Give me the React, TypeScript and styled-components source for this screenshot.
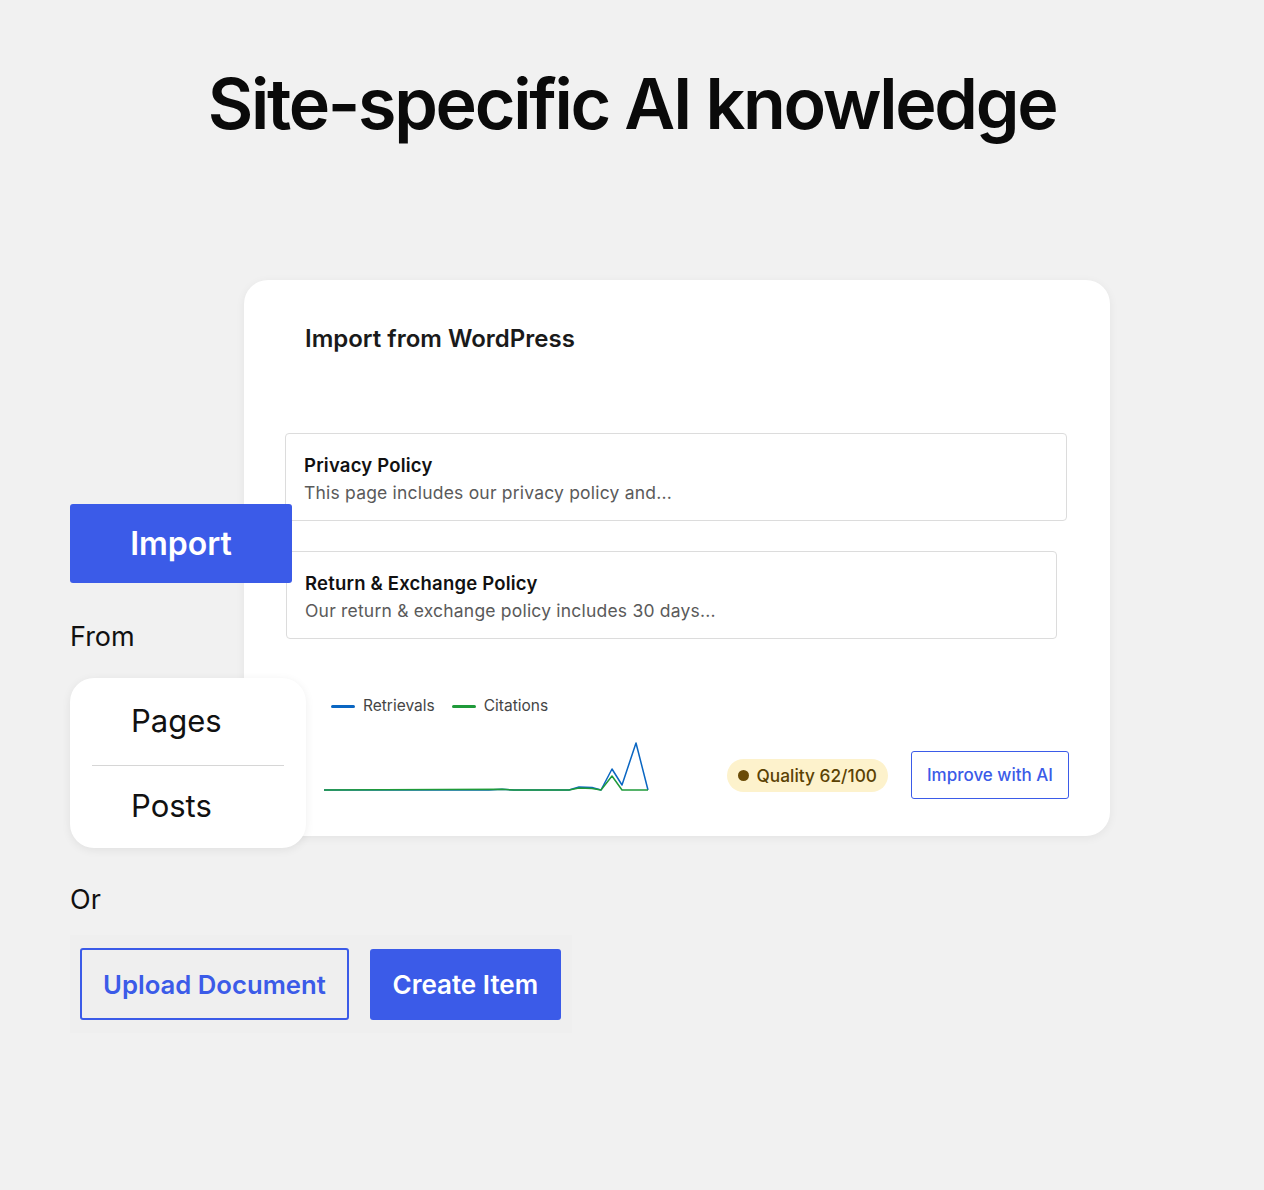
import styled, { createGlobalStyle } from 'styled-components';

const GlobalStyle = createGlobalStyle`
	body {
		margin: 0;
		background: #f1f1f1;
		font-family: Inter, 'Noto Sans', sans-serif;
		color: #111;
	}
`;

const Page = styled.div`
	width: 1264px;
	height: 1190px;
	padding: 61px 0 0 70px;
	box-sizing: border-box;
`;

const Title = styled.h1`
	margin: 0 0 0 -70px;
	text-align: center;
	font-size: 70px;
	line-height: 86px;
	font-weight: 600;
	letter-spacing: -2.3px;
	color: #0a0a0a;
`;

const Stage = styled.div`
	display: grid;
	grid-template-columns: 174px 62px 804px;
	margin-top: 133px;
`;

const Card = styled.div`
	grid-column: 2 / 4;
	grid-row: 1;
	align-self: start;
	background: #fff;
	border-radius: 24px;
	box-shadow: 0 2px 10px rgba(0, 0, 0, 0.06);
	padding: 44px 43px 37px 41px;
	display: flex;
	flex-direction: column;
`;

const CardTitle = styled.h2`
	margin: 0 0 79px 20px;
	font-size: 24px;
	line-height: 30px;
	font-weight: 600;
	color: #1a1a1a;
`;

const Item = styled.div<{ $inset: number; $gap: number }>`
	margin-right: ${({ $inset }) => $inset}px;
	margin-left: ${({ $inset }) => ($inset ? 1 : 0)}px;
	margin-bottom: ${({ $gap }) => $gap}px;
	border: 1.5px solid #dcdcdc;
	border-radius: 4px;
	padding: 19px 18px 15px;
`;

const ItemTitle = styled.div`
	font-size: 18.5px;
	line-height: 24px;
	font-weight: 600;
	letter-spacing: 0.2px;
	color: #111;
`;

const ItemDesc = styled.div`
	margin-top: 4px;
	font-size: 17.5px;
	line-height: 24px;
	letter-spacing: 0.2px;
	color: #5a5a5a;
`;

const StatsRow = styled.div`
	display: flex;
	align-items: flex-end;
	justify-content: space-between;
	margin-top: 57px;
`;

const ChartBox = styled.div`
	display: flex;
	flex-direction: column;
	margin-left: 39px;
`;

const Legend = styled.div`
	display: flex;
	gap: 17px;
	margin-left: 7px;
	font-size: 15.5px;
	line-height: 20px;
	color: #454545;
`;

const LegendItem = styled.span<{ $color: string }>`
	display: flex;
	align-items: center;
	gap: 8px;

	&::before {
		content: '';
		width: 24px;
		height: 3px;
		border-radius: 2px;
		background: ${({ $color }) => $color};
	}
`;

const Chart = styled.svg`
	margin: 19px 0 4px;
`;

const Actions = styled.div`
	display: flex;
	align-items: center;
	gap: 23px;
	margin-right: -2px;
`;

const Badge = styled.span`
	display: flex;
	align-items: center;
	gap: 8px;
	height: 33px;
	padding: 0 11px;
	border-radius: 17px;
	background: #fdf2cc;
	color: #5b4204;
	font-size: 17.3px;
	font-weight: 500;

	&::before {
		content: '';
		width: 11px;
		height: 11px;
		border-radius: 50%;
		background: #6b4c08;
	}
`;

const OutlineButton = styled.button<{ $big?: boolean }>`
	box-sizing: border-box;
	flex-shrink: 0;
	white-space: nowrap;
	height: ${({ $big }) => ($big ? 72 : 48)}px;
	padding: 0 ${({ $big }) => ($big ? 21 : 15)}px;
	border: ${({ $big }) => ($big ? 2 : 1.5)}px solid #3b5be8;
	border-radius: 3px;
	background: ${({ $big }) => ($big ? 'transparent' : '#fff')};
	color: #3b5be8;
	font-family: Inter, sans-serif;
	font-size: ${({ $big }) => ($big ? 25.7 : 17)}px;
	font-weight: ${({ $big }) => ($big ? 600 : 500)};
`;

const SolidButton = styled.button<{ $w: number; $h: number; $size: number }>`
	flex-shrink: 0;
	width: ${({ $w }) => $w}px;
	height: ${({ $h }) => $h}px;
	white-space: nowrap;
	border: none;
	border-radius: 3px;
	background: #3b5be8;
	color: #fff;
	font-family: Inter, sans-serif;
	font-size: ${({ $size }) => $size}px;
	font-weight: 600;
`;

const LeftColumn = styled.div`
	grid-column: 1 / 3;
	grid-row: 1;
	margin-top: 224px;
	display: flex;
	flex-direction: column;
	align-items: flex-start;
	z-index: 1;
`;

const Label = styled.div<{ $top: number }>`
	margin-top: ${({ $top }) => $top}px;
	font-size: 27px;
	line-height: 32px;
	color: #111;
`;

const SourceCard = styled.div`
	margin-top: 25px;
	width: 236px;
	box-sizing: border-box;
	background: #fff;
	border-radius: 24px;
	box-shadow: 0 2px 10px rgba(0, 0, 0, 0.07);
	padding: 0 22px;
`;

const Source = styled.div`
	padding: 0 0 2px 39px;
	height: 87px;
	box-sizing: border-box;
	display: flex;
	align-items: center;
	font-size: 31px;
	color: #111;

	& + & {
		border-top: 1.5px solid #d6d6d6;
		height: 83px;
		padding-bottom: 4px;
	}
`;

const ButtonTray = styled.div`
	margin-top: 19px;
	display: flex;
	align-items: center;
	gap: 21px;
	width: 502px;
	box-sizing: border-box;
	padding: 13px 10px;
	background: #efefef;
`;

const blue = '0,55 165,55 178,54.3 190,55 245,55 255,52 268,52.5 277,55 288,34 298,50 312,8 324,55';
const green = '0,55 178,54.3 190,55 245,55 255,53 268,53.5 277,55 288,41 298,55 324,55';

export default function App() {
	return (
		<Page>
			<GlobalStyle />
			<Title>Site-specific AI knowledge</Title>
			<Stage>
				<Card>
					<CardTitle>Import from WordPress</CardTitle>
					<Item $inset={0} $gap={30}>
						<ItemTitle>Privacy Policy</ItemTitle>
						<ItemDesc>This page includes our privacy policy and...</ItemDesc>
					</Item>
					<Item $inset={10} $gap={0}>
						<ItemTitle>Return &amp; Exchange Policy</ItemTitle>
						<ItemDesc>Our return &amp; exchange policy includes 30 days...</ItemDesc>
					</Item>
					<StatsRow>
						<ChartBox>
							<Legend>
								<LegendItem $color="#0a66c2">Retrievals</LegendItem>
								<LegendItem $color="#1f9a3a">Citations</LegendItem>
							</Legend>
							<Chart width="326" height="60" viewBox="0 0 326 60">
								<polyline points={blue} fill="none" stroke="#0a66c2" strokeWidth="1.5" strokeLinejoin="round" />
								<polyline points={green} fill="none" stroke="#1f9a3a" strokeWidth="1.5" strokeLinejoin="round" />
							</Chart>
						</ChartBox>
						<Actions>
							<Badge>Quality 62/100</Badge>
							<OutlineButton>Improve with AI</OutlineButton>
						</Actions>
					</StatsRow>
				</Card>
				<LeftColumn>
					<SolidButton $w={222} $h={79} $size={32}>Import</SolidButton>
					<Label $top={38}>From</Label>
					<SourceCard>
						<Source>Pages</Source>
						<Source>Posts</Source>
					</SourceCard>
				</LeftColumn>
			</Stage>
			<Label $top={36}>Or</Label>
			<ButtonTray>
				<OutlineButton $big>Upload Document</OutlineButton>
				<SolidButton $w={191} $h={71} $size={26}>Create Item</SolidButton>
			</ButtonTray>
		</Page>
	);
}
